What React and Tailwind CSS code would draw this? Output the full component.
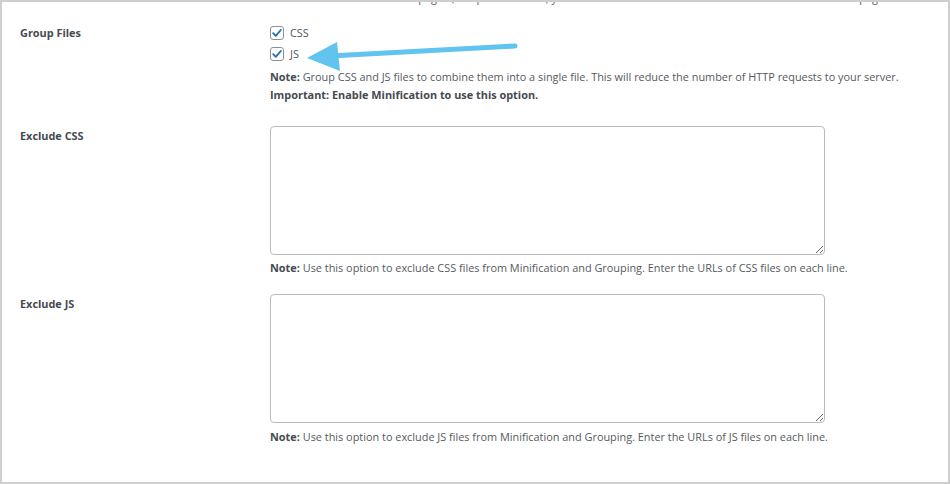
import React from 'react';

function Check({ label }) {
  return (
    <label className="flex h-[21px] items-center gap-[6px]">
      <span className="flex h-[14px] w-[14px] items-center justify-center rounded-[3px] border border-[#8c8f94] bg-white">
        <svg width="12" height="12" viewBox="0 0 12 12">
          <path d="M2.2 6.2 L4.8 8.8 L9.8 3" fill="none" stroke="#2271b1" strokeWidth="1.9" strokeLinecap="round" strokeLinejoin="round" />
        </svg>
      </span>
      <span className="text-[#50575e]">{label}</span>
    </label>
  );
}

function Field({ label, children, className = '' }) {
  return (
    <div className={`grid grid-cols-[268px_1fr] ${className}`}>
      <div className="pl-[18px] font-bold text-[#454a50]">{label}</div>
      <div>{children}</div>
    </div>
  );
}

export default function App() {
  return (
    <div className="relative h-[484px] w-[950px] overflow-hidden border-2 border-[#cfcfcf] bg-white font-['Open_Sans',sans-serif] text-[10.9px] leading-[18px] text-[#555a60]">
      <div className="h-[4px] overflow-hidden pl-[268px]">
        <div className="-mt-[13px] whitespace-nowrap">
          <b className="text-[#454a50]">Note:</b> Select the areas of the pages (and parts of them) you want to exclude from Minification. Enter the URLs of the pages on each line.
        </div>
      </div>

      <Field label={<div className="mt-[16px] leading-[21px]">Group Files</div>}>
        <div className="pt-[16px]">
          <Check label="CSS" />
          <Check label="JS" />
          <p className="mt-[4px]">
            <b className="text-[#454a50]">Note:</b> Group CSS and JS files to combine them into a single file. This will reduce the number of HTTP requests to your server.
          </p>
          <p className="font-bold text-[#454a50]">Important: Enable Minification to use this option.</p>
        </div>
      </Field>

      <Field label={<div className="mt-[1px]">Exclude CSS</div>} className="mt-[22px]">
        <textarea className="block h-[129px] w-[555px] rounded-[4px] border border-[#bbbbbb] bg-white" />
        <p className="mt-[4px]">
          <b className="text-[#454a50]">Note:</b> Use this option to exclude CSS files from Minification and Grouping. Enter the URLs of CSS files on each line.
        </p>
      </Field>

      <Field label={<div className="mt-[1px]">Exclude JS</div>} className="mt-[17px]">
        <textarea className="block h-[129px] w-[555px] rounded-[4px] border border-[#bbbbbb] bg-white" />
        <p className="mt-[5px]">
          <b className="text-[#454a50]">Note:</b> Use this option to exclude JS files from Minification and Grouping. Enter the URLs of JS files on each line.
        </p>
      </Field>

      <svg className="pointer-events-none absolute left-0 top-0" width="950" height="484">
        <line x1="513" y1="44" x2="328" y2="54" stroke="#60c4ef" strokeWidth="5" strokeLinecap="round" />
        <polygon points="305,56 335,40 338,69" fill="#60c4ef" />
      </svg>
    </div>
  );
}
